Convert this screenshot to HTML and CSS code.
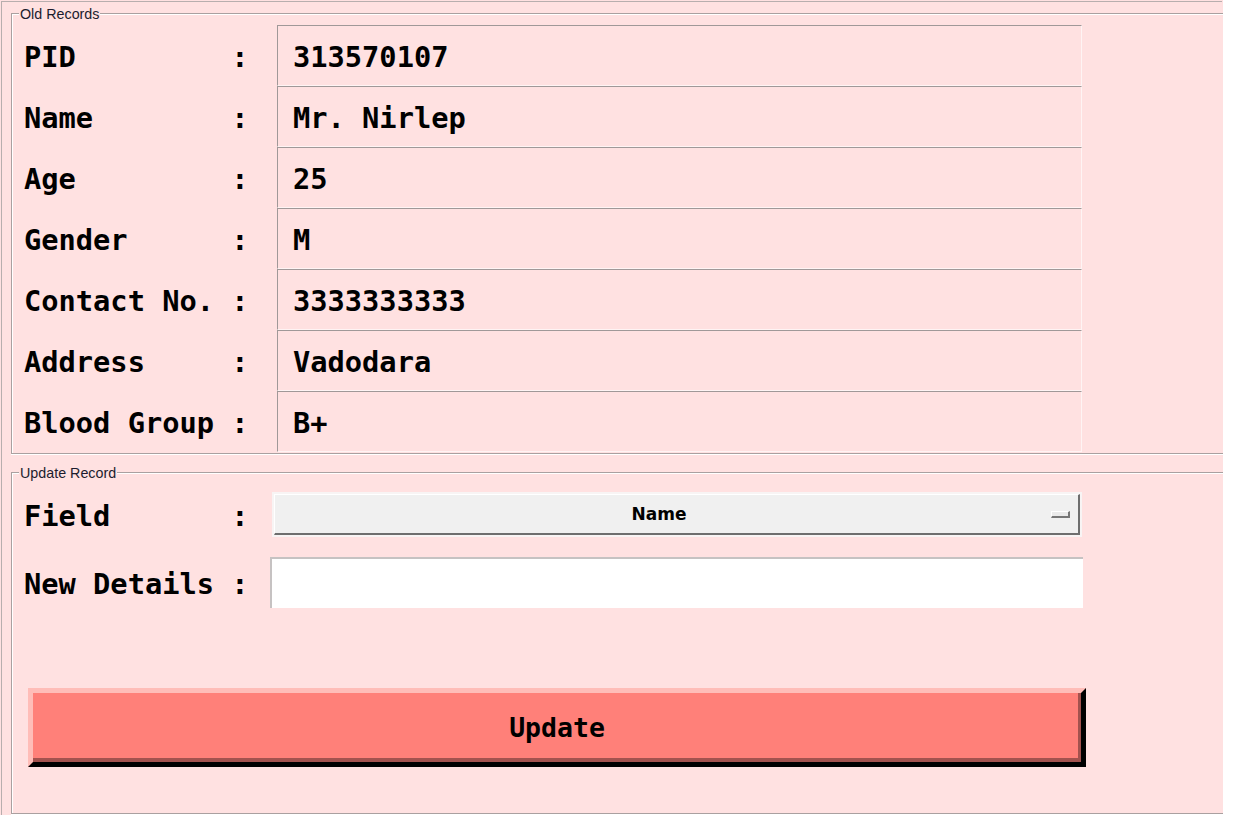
FILE: index.html
```html
<!DOCTYPE html>
<html>
<head>
<meta charset="utf-8">
<title>Update Record</title>
<link rel="stylesheet" href="styles.css">
</head>
<body>
<div class="window">
  <div class="outer">
    <div class="group group-old">
      <span class="group-title">Old Records</span>
      <div class="records">
        <div class="lbl">PID         :</div><div class="val">313570107</div>
        <div class="lbl">Name        :</div><div class="val">Mr. Nirlep</div>
        <div class="lbl">Age         :</div><div class="val">25</div>
        <div class="lbl">Gender      :</div><div class="val">M</div>
        <div class="lbl">Contact No. :</div><div class="val">3333333333</div>
        <div class="lbl">Address     :</div><div class="val">Vadodara</div>
        <div class="lbl">Blood Group :</div><div class="val">B+</div>
      </div>
    </div>
    <div class="group group-update">
      <span class="group-title">Update Record</span>
      <div class="row row-field">
        <div class="lbl lbl-field">Field       :</div>
        <div class="select">
          <div class="select-face">
            <span class="select-text">Name</span>
            <span class="select-ind"></span>
          </div>
        </div>
      </div>
      <div class="row row-entry">
        <div class="lbl lbl-entry">New Details :</div>
        <div class="entry"></div>
      </div>
      <div class="btn">Update</div>
    </div>
  </div>
</div>
</body>
</html>
```

FILE: styles.css
```css
html, body {
  margin: 0;
  padding: 0;
  background: #ffffff;
}

.window {
  width: 1223px;
  height: 815px;
  overflow: hidden;
  background: #ffe1e1;
  padding: 1px 0 0 1px;
  box-sizing: border-box;
}

.outer {
  width: 1221px;
  height: 100%;
  box-sizing: border-box;
  border-top: 1px solid #b8aeae;
  border-left: 1px solid #b8aeae;
  padding: 11px 0 0 9px;
}

.group {
  position: relative;
  width: 1240px;
  box-sizing: border-box;
  border: 1px solid #aaa0a0;
  box-shadow: inset 1px 1px 0 #ffffff, 0 1px 0 #ffffff;
}

.group-title {
  position: absolute;
  top: -8px;
  left: 7px;
  padding: 0 1px;
  background: #ffe1e1;
  font-family: "Liberation Sans", Arial, sans-serif;
  font-size: 14.3px;
  line-height: 16px;
  color: #1c1c2e;
}

.group-old {
  padding: 11px 0 1px 12px;
}

.records {
  display: grid;
  grid-template-columns: 253px 805px;
  grid-auto-rows: 61px;
}

.lbl, .val, .btn {
  font-family: "DejaVu Sans Mono", "Liberation Mono", monospace;
  font-weight: bold;
  font-size: 28.7px;
  color: #000;
  white-space: pre;
}

.lbl {
  display: flex;
  align-items: center;
  padding-top: 2px;
  box-sizing: border-box;
}

.val {
  display: flex;
  align-items: center;
  box-sizing: border-box;
  border-top: 1px solid #a09898;
  border-left: 1px solid #a09898;
  border-right: 1px solid #fff4f4;
  border-bottom: 1px solid #fff4f4;
  padding-left: 15px;
  padding-top: 2px;
}

.group-update {
  margin-top: 18px;
  height: 342px;
  padding: 19px 0 0 12px;
}

.row {
  display: flex;
  align-items: center;
}

.row-field {
  height: 45px;
}

.lbl-field {
  width: 248px;
  height: 100%;
}

.select {
  width: 810px;
  height: 45px;
  box-sizing: border-box;
  border: 2px solid #f8f4f4;
  background: #f0f0f0;
}

.select-face {
  height: 100%;
  box-sizing: border-box;
  border-top: 1px solid #ffffff;
  border-left: 1px solid #ffffff;
  border-right: 2px solid #6e6e6e;
  border-bottom: 2px solid #6e6e6e;
  display: flex;
  align-items: center;
  padding-right: 8px;
}

.select-text {
  flex: 1;
  text-align: center;
  font-family: "DejaVu Sans", Verdana, sans-serif;
  font-weight: bold;
  font-size: 17px;
  color: #000;
}

.select-ind {
  margin-left: 8px;
  width: 19px;
  height: 7px;
  box-sizing: border-box;
  background: #ebebeb;
  border-top: 1px solid #ffffff;
  border-left: 1px solid #ffffff;
  border-right: 2px solid #777777;
  border-bottom: 2px solid #777777;
}

.row-entry {
  height: 51px;
  margin-top: 20px;
}

.lbl-entry {
  width: 246px;
  height: 100%;
}

.entry {
  width: 813px;
  height: 51px;
  box-sizing: border-box;
  background: #ffffff;
  border-top: 2px solid #c6c2c2;
  border-left: 2px solid #c6c2c2;
}

.btn {
  margin-top: 80px;
  margin-left: 4px;
  width: 1058px;
  height: 79px;
  box-sizing: border-box;
  background: #ff8079;
  border-style: solid;
  border-width: 5px;
  border-color: #ffbdb8 #000000 #000000 #ffbdb8;
  box-shadow: inset -3px -4px 0 #a3524e;
  display: flex;
  align-items: center;
  justify-content: center;
  font-size: 26.5px;
}
```
